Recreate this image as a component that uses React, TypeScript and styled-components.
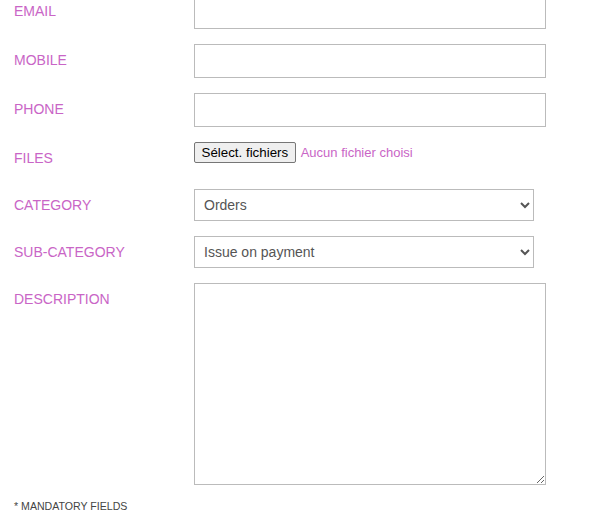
import React from 'react'
import styled, { createGlobalStyle } from 'styled-components'

const GlobalStyle = createGlobalStyle`
  html, body {
    margin: 0;
    padding: 0;
    background: #fff;
    font-family: "Liberation Sans", Arial, sans-serif;
  }
`

const Form = styled.form({
  marginTop: -5,
  paddingLeft: 14,
})

const Grid = styled.div({
  display: 'grid',
  gridTemplateColumns: '180px 1fr',
  rowGap: 15,
  alignItems: 'start',
})

const Label = styled.label({
  fontSize: 14,
  lineHeight: '32px',
  color: '#c965c6',
  textTransform: 'uppercase',
})

const TextInput = styled.input({
  display: 'block',
  boxSizing: 'border-box',
  width: 352,
  height: 34,
  border: '1px solid #bbb',
  borderRadius: 0,
  padding: '0 8px',
  fontSize: 14,
  fontFamily: 'inherit',
  outline: 'none',
})

const FileRow = styled.div({
  display: 'flex',
  alignItems: 'center',
  gap: 5,
  height: 21,
})

const FileButton = styled.button({
  boxSizing: 'border-box',
  height: 21,
  padding: '0 6.5px',
  background: '#efefef',
  border: '1px solid #767676',
  borderRadius: 2,
  fontFamily: '"Liberation Sans", Arial, sans-serif',
  fontSize: 13.33,
  color: '#000',
})

const FileStatus = styled.span({
  fontSize: 13,
  color: '#c965c6',
})

const Select = styled.select({
  display: 'block',
  boxSizing: 'border-box',
  width: 340,
  height: 32,
  border: '1px solid #bbb',
  borderRadius: 0,
  background: '#fff',
  padding: '0 5px',
  fontSize: 14,
  fontFamily: '"Liberation Sans", Arial, sans-serif',
  color: '#555',
  outline: 'none',
})

const TextArea = styled.textarea({
  display: 'block',
  boxSizing: 'border-box',
  width: 352,
  height: 202,
  border: '1px solid #bbb',
  borderRadius: 0,
  padding: 8,
  fontFamily: 'inherit',
  fontSize: 14,
  outline: 'none',
})

const Mandatory = styled.p({
  margin: '15px 0 0',
  fontSize: 10.6,
  lineHeight: '12px',
  color: '#444',
  textTransform: 'uppercase',
})

export default function App() {
  return (
    <>
      <GlobalStyle />
      <Form onSubmit={(e) => e.preventDefault()}>
        <Grid>
          <Label htmlFor="email">Email</Label>
          <TextInput id="email" type="text" />

          <Label htmlFor="mobile">Mobile</Label>
          <TextInput id="mobile" type="text" />

          <Label htmlFor="phone">Phone</Label>
          <TextInput id="phone" type="text" />

          <Label>Files</Label>
          <FileRow>
            <FileButton type="button">Sélect. fichiers</FileButton>
            <FileStatus>Aucun fichier choisi</FileStatus>
          </FileRow>

          <Label htmlFor="category">Category</Label>
          <Select id="category" defaultValue="orders">
            <option value="orders">Orders</option>
          </Select>

          <Label htmlFor="subcategory">Sub-category</Label>
          <Select id="subcategory" defaultValue="payment">
            <option value="payment">Issue on payment</option>
          </Select>

          <Label htmlFor="description">Description</Label>
          <TextArea id="description" />
        </Grid>
        <Mandatory>* Mandatory fields</Mandatory>
      </Form>
    </>
  )
}
